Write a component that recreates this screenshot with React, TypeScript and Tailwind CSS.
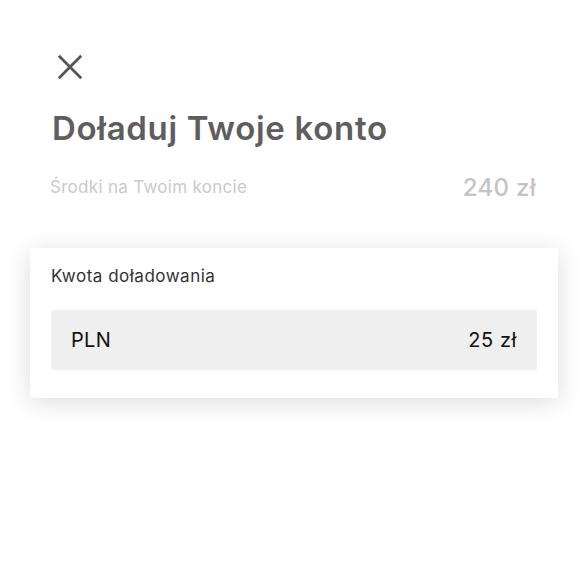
export default function App() {
  return (
    <div className="min-h-[576px] w-[588px] bg-white font-['Inter',sans-serif]">
      <div className="px-[52px] pt-[54px]">
        <button className="ml-[5px] flex h-[26px] w-[26px] items-center justify-center text-[#555]">
          <svg width="28" height="28" viewBox="0 0 28 28" fill="none" stroke="currentColor" strokeWidth="3" strokeLinecap="square">
            <path d="M3 3 L25 25 M25 3 L3 25" />
          </svg>
        </button>
        <h1 className="mt-[28px] text-[33px] font-semibold leading-[40px] tracking-[0.7px] text-[#5e5e5e]">
          Doładuj Twoje konto
        </h1>
        <div className="mt-[22px] flex items-center justify-between">
          <span className="-ml-[2px] text-[17px] tracking-[0.3px] text-[#cacaca]">Środki na Twoim koncie</span>
          <span className="text-[24px] font-medium tracking-[0.3px] text-[#c4c4c4]">240 zł</span>
        </div>
      </div>
      <div className="mx-[30px] mt-[42px] bg-white px-[21px] pt-[17px] pb-[28px] shadow-[0_4px_24px_rgba(0,0,0,0.14)]">
        <div className="text-[17px] leading-[22px] tracking-[0.5px] text-[#333]">Kwota doładowania</div>
        <div className="mt-[23px] flex h-[60px] items-center justify-between rounded-[2px] bg-[#efefef] px-[20px]">
          <span className="text-[20px] tracking-[0.3px] text-[#111]">PLN</span>
          <span className="text-[20px] tracking-[0.6px] text-[#111]">25 zł</span>
        </div>
      </div>
    </div>
  );
}
